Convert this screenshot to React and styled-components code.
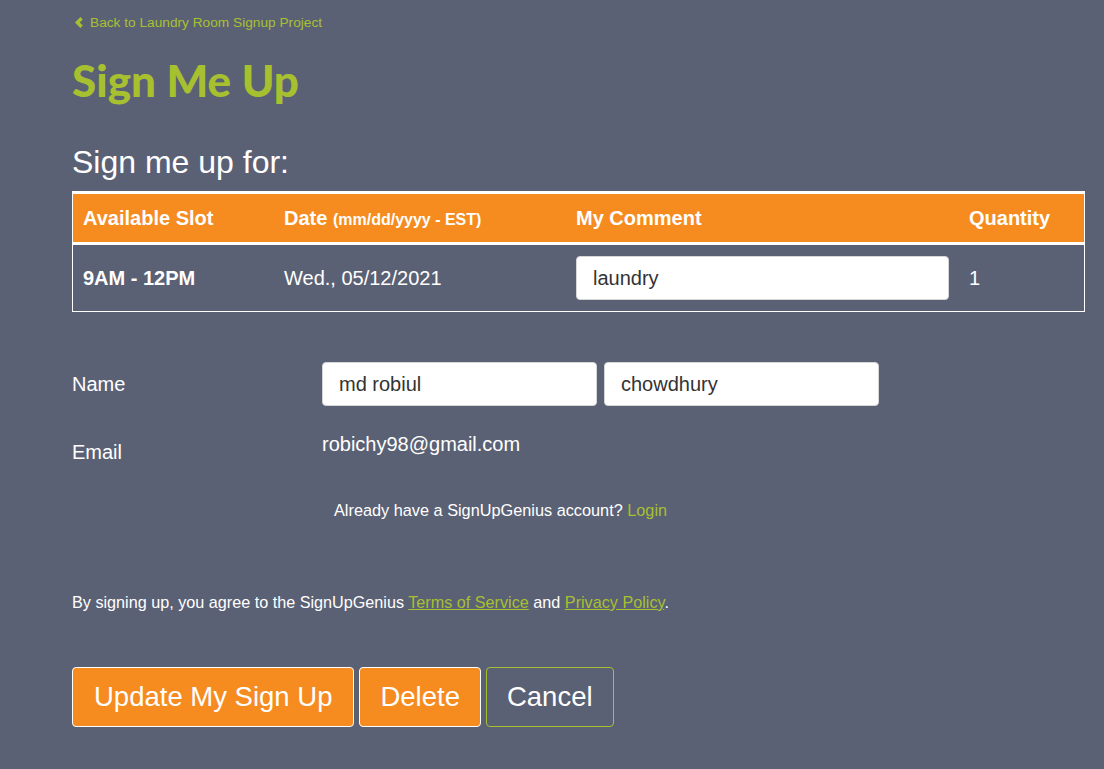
import React from 'react';
import styled, { createGlobalStyle } from 'styled-components';

const colors = {
  bg: '#5b6175',
  orange: '#f68b1f',
  green: '#a7c030',
  white: '#ffffff',
  inputText: '#333333',
};

const GlobalStyle = createGlobalStyle`
  html, body {
    margin: 0;
    padding: 0;
    background: ${colors.bg};
  }
  body {
    font-family: "Liberation Sans", Arial, sans-serif;
    color: ${colors.white};
  }
`;

const Page = styled.div`
  min-height: 769px;
  padding: 14px 19px 40px 72px;
  box-sizing: border-box;
`;

const BackLink = styled.a`
  display: inline-flex;
  align-items: center;
  gap: 7px;
  color: ${colors.green};
  font-size: 13.7px;
  text-decoration: none;
  margin-left: 3px;
  svg {
    width: 8px;
    height: 11px;
  }
`;

const Title = styled.h1`
  font-family: Lato, "Liberation Sans", sans-serif;
  font-weight: 900;
  font-size: 44px;
  color: ${colors.green};
  margin: 18px 0 0;
  line-height: 60px;
`;

const SubTitle = styled.h2`
  font-weight: 400;
  font-size: 32px;
  margin: 33px 0 0;
  line-height: 38px;
`;

const SlotTable = styled.table`
  width: 1013px;
  margin-top: 10px;
  border-collapse: separate;
  border-spacing: 0;
  border: 1px solid ${colors.white};
  font-size: 20px;
  th,
  td {
    text-align: left;
    padding: 0 10px;
  }
  th {
    height: 48px;
    font-weight: 700;
    background: ${colors.orange};
    border-top: 2px solid ${colors.white};
    border-bottom: 3px solid ${colors.white};
  }
  td {
    height: 66px;
  }
`;

const Small = styled.span`
  font-size: 16px;
`;

const BoldCell = styled.td`
  font-weight: 700;
`;

const TextInput = styled.input`
  box-sizing: border-box;
  width: ${({ $w }) => $w}px;
  height: 44px;
  border: 1px solid #d6d6d6;
  border-radius: 4px;
  background: ${colors.white};
  color: ${colors.inputText};
  font-family: "Liberation Sans", Arial, sans-serif;
  font-size: 20px;
  padding: 0 16px;
  outline: none;
`;

const Form = styled.div`
  display: grid;
  grid-template-columns: 250px 1fr;
  row-gap: 20px;
  margin-top: 50px;
  font-size: 20px;
`;

const Label = styled.div`
  display: flex;
  align-items: ${({ $top }) => ($top ? 'flex-start' : 'center')};
  padding-top: ${({ $top }) => ($top ? '15px' : '0')};
`;

const Fields = styled.div`
  display: flex;
  gap: 7px;
`;

const EmailValue = styled.div`
  padding-top: 7px;
  line-height: 22px;
`;

const LoginNote = styled.p`
  grid-column: 2;
  margin: 17px 0 0 12px;
  font-size: 16.3px;
  a {
    color: ${colors.green};
    text-decoration: none;
  }
`;

const Terms = styled.p`
  margin: 73px 0 0;
  font-size: 16.2px;
  a {
    color: ${colors.green};
    text-decoration: underline;
  }
`;

const Buttons = styled.div`
  display: flex;
  gap: 5px;
  margin-top: 55px;
`;

const Button = styled.button`
  height: 60px;
  padding: 0 ${({ $pad }) => $pad}px;
  border-radius: 4px;
  font-family: "Liberation Sans", Arial, sans-serif;
  font-size: 27.5px;
  color: ${colors.white};
  background: ${({ $ghost }) => ($ghost ? 'transparent' : colors.orange)};
  border: 1px solid ${({ $ghost }) => ($ghost ? colors.green : colors.white)};
  cursor: pointer;
`;

function Chevron() {
  return (
    <svg viewBox="0 0 8 11" aria-hidden="true">
      <polygon points="5.4,0 7.8,2.4 4.7,5.5 7.8,8.6 5.4,11 0,5.5" fill="currentColor" />
    </svg>
  );
}

export default function App() {
  return (
    <>
      <GlobalStyle />
      <Page>
        <BackLink href="#">
          <Chevron />
          Back to Laundry Room Signup Project
        </BackLink>
        <Title>Sign Me Up</Title>
        <SubTitle>Sign me up for:</SubTitle>
        <SlotTable>
          <colgroup>
            <col style={{ width: 201 }} />
            <col style={{ width: 292 }} />
            <col style={{ width: 393 }} />
            <col />
          </colgroup>
          <thead>
            <tr>
              <th>Available Slot</th>
              <th>
                Date <Small>(mm/dd/yyyy - EST)</Small>
              </th>
              <th>My Comment</th>
              <th>Quantity</th>
            </tr>
          </thead>
          <tbody>
            <tr>
              <BoldCell>9AM - 12PM</BoldCell>
              <td>Wed., 05/12/2021</td>
              <td>
                <TextInput $w={373} defaultValue="laundry" />
              </td>
              <td>1</td>
            </tr>
          </tbody>
        </SlotTable>

        <Form>
          <Label>Name</Label>
          <Fields>
            <TextInput $w={275} defaultValue="md robiul" />
            <TextInput $w={275} defaultValue="chowdhury" />
          </Fields>
          <Label $top>Email</Label>
          <EmailValue>robichy98@gmail.com</EmailValue>
          <LoginNote>
            Already have a SignUpGenius account? <a href="#">Login</a>
          </LoginNote>
        </Form>

        <Terms>
          By signing up, you agree to the SignUpGenius <a href="#">Terms of Service</a> and{' '}
          <a href="#">Privacy Policy</a>.
        </Terms>

        <Buttons>
          <Button $pad={21}>Update My Sign Up</Button>
          <Button $pad={20}>Delete</Button>
          <Button $pad={20} $ghost>
            Cancel
          </Button>
        </Buttons>
      </Page>
    </>
  );
}
